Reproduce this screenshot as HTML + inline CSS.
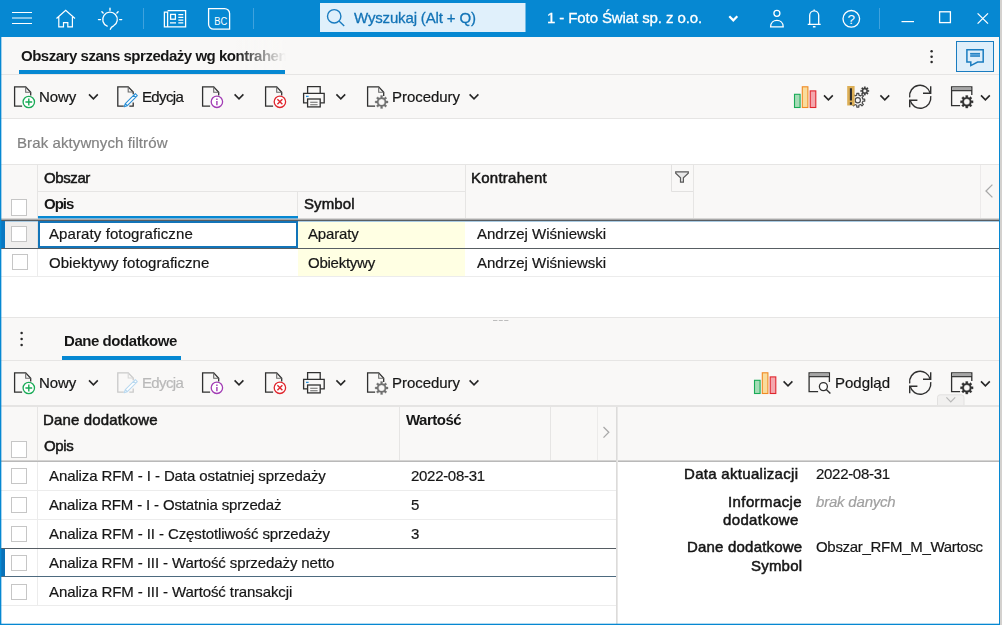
<!DOCTYPE html>
<html lang="pl">
<head>
<meta charset="utf-8">
<title>Obszary szans sprzedaży wg kontrahentów</title>
<style>
html,body{margin:0;padding:0;overflow:hidden;}
body{width:1002px;height:625px;overflow:hidden;background:#d4d1ce;position:relative;font-family:"Liberation Sans",sans-serif;font-size:15px;color:#161616;}
#win{position:absolute;left:0;top:0;width:1000px;height:625px;background:#fff;overflow:hidden;}
.abs{position:absolute;}
.t{position:absolute;white-space:nowrap;line-height:20px;height:20px;will-change:transform;-webkit-text-stroke:0.2px;}
.b{font-weight:bold;-webkit-text-stroke:0;}
.m{-webkit-text-stroke:0.5px;}
.hl{position:absolute;height:1px;background:#e6e5e4;}
.vl{position:absolute;width:1px;background:#e6e5e4;}
.bg{position:absolute;background:#f9f8f7;}
.cb{position:absolute;width:14px;height:14px;border:1px solid #c6c6c6;background:#fff;}
svg{position:absolute;overflow:visible;}
</style>
</head>
<body>
<div id="win">

<!-- ===== title bar ===== -->
<div class="abs" id="titlebar" style="left:0;top:0;width:1000px;height:37px;background:#0688d2;"></div>
<svg id="tb" width="1000" height="37" viewBox="0 0 1000 37" style="left:0;top:0;" fill="none" stroke="#fff" stroke-width="1.3">
<!-- hamburger -->
<path d="M12 12.500H32M12 18H32M12 23.500H32" stroke-width="1.150"/>
<!-- home -->
<path d="M56.5 18.5L65.7 10.3L75 18.5M58.8 17V26.8H63.5V22.6H67.8V26.8H72.4V17" stroke-width="1.200" stroke-linejoin="miter"/>
<!-- bulb -->
<path d="M107.2 26.2A7.3 7.3 0 1 1 113.6 25.8C111.8 26.6 110.8 27.6 110.3 29.3" stroke-width="1.300" stroke-linecap="round"/>
<path d="M110 8.300V10.300M101.900 11.700L103.100 12.900M118.100 11.700L116.900 12.900M98.500 19.600H100.500M119.700 19.600H121.700" stroke-width="1.400" stroke-linecap="round"/>
<!-- separators -->
<path d="M143.5 8V29M253.5 8V29M879.5 8V29" stroke="#3fa2dd" stroke-width="1"/>
<!-- news -->
<path d="M167.6 10.7H185.6V26.8H164.4V12.2H167.6V26.8" stroke-width="1.3"/>
<rect x="170.6" y="14.4" width="4.8" height="4.8" stroke-width="1.3"/>
<path d="M178.3 14.6H183.3M178.3 17.4H183.3M178.3 20.2H183.3M170 22.9H176M178.3 22.9H183.3" stroke-width="1.2"/>
<!-- BC -->
<path d="M208.6 8.6H224.6A5 5 0 0 1 229.6 13.6V29.2H213.6A5 5 0 0 1 208.6 24.2Z" stroke-width="1.3"/>
<!-- search box -->
<rect x="320" y="3" width="205.500" height="29" fill="#e0f0fb" stroke="none"/>
<circle cx="334.200" cy="16.300" r="6.700" stroke="#1a7cc0" stroke-width="1.4"/>
<path d="M339 21.100L344.200 26" stroke="#1a7cc0" stroke-width="1.4"/>
<!-- chevron -->
<path d="M729.300 16.200L733.300 20.300L737.300 16.200" stroke-width="2.200"/>
<!-- person -->
<circle cx="776.900" cy="13.300" r="3" stroke-width="1.300"/>
<path d="M770.600 26.800C770.600 18.200 783.200 18.200 783.200 26.800Z" stroke-width="1.300"/>
<!-- bell -->
<path d="M807.700 24.300H820.700M809.700 24.300V15.300A4.500 4.500 0 0 1 818.700 15.300V24.300" stroke-width="1.300"/>
<path d="M814.200 10.800V9.500M812.900 26.700H815.500" stroke-width="1.400"/>
<!-- help -->
<circle cx="851.300" cy="18.800" r="8.300" stroke-width="1.300"/>
<!-- min / max / close -->
<path d="M901.500 21.600H914" stroke-width="1.200"/>
<rect x="939.600" y="11.800" width="10.800" height="10.800" stroke-width="1.300"/>
<path d="M977.600 13.400L988 23.600M988 13.400L977.600 23.600" stroke-width="1.300"/>
<text x="214.300" y="25.400" font-family="Liberation Sans, sans-serif" font-size="10" fill="#fff" stroke="none" textLength="13" lengthAdjust="spacingAndGlyphs">BC</text>
<text x="851.200" y="23.900" font-family="Liberation Sans, sans-serif" font-size="13.500" fill="#fff" stroke="none" text-anchor="middle">?</text>
</svg>

<!-- ===== tab bar 1 ===== -->
<div class="bg" style="left:1px;top:37px;width:998px;height:37px;"></div>
<div class="hl" style="left:1px;top:74px;width:998px;"></div>
<div class="t b" style="left:21px;top:46px;width:265px;overflow:hidden;letter-spacing:-0.48px;">Obszary szans sprzedaży wg kontrahentów</div>
<div class="abs" style="left:236px;top:40px;width:52px;height:30px;background:linear-gradient(to right,rgba(249,248,247,0),rgba(249,248,247,1) 96%);"></div>
<div class="abs" style="left:19px;top:70px;width:266px;height:4px;background:#0688d2;"></div>

<svg width="80" height="37" viewBox="920 37 80 37" style="left:920px;top:37px;" fill="none">
<circle cx="931.6" cy="51.2" r="1.25" fill="#2a2a2a"/><circle cx="931.6" cy="56.700" r="1.25" fill="#2a2a2a"/><circle cx="931.6" cy="62.100" r="1.25" fill="#2a2a2a"/>
<rect x="956.5" y="41.5" width="37" height="30" fill="#deeefa" stroke="#1a7cc0" stroke-width="1"/>
<path d="M966.9 49.800H983.200V62H977.600L970.800 65.600V62H966.900Z" stroke="#1a7cc0" stroke-width="1.500" fill="none" stroke-linejoin="miter"/>
<rect x="970.200" y="53" width="9.800" height="3.600" fill="#5aa3d8"/>
<path d="M970.200 53.400H980M970.200 56.200H980" stroke="#1a7cc0" stroke-width="0.900"/>
</svg>
<!-- ===== toolbar 1 ===== -->
<div class="bg" style="left:1px;top:75px;width:998px;height:43px;"></div>
<div class="hl" style="left:1px;top:118px;width:998px;"></div>

<!--TB1--><svg width="1000" height="44" viewBox="0 75 1000 44" style="left:0;top:75px;" fill="none">
<path d="M22.1 106.1 H14.6 V86.8 H25.7 L30.7 92.2 V95.5" stroke="#303030" stroke-width="1.3" fill="none"/><path d="M25.7 86.8 V92.2 H30.7" stroke="#6a6a6a" stroke-width="1.1" fill="none"/>
<circle cx="28.8" cy="102" r="5.7" fill="#fff" stroke="#1aab57" stroke-width="1.3"/>
<path d="M25.4 102H32.2M28.8 98.6V105.4" stroke="#1aab57" stroke-width="1.4"/>
<path d="M89 94.4 L93.4 98.8 L97.8 94.4" stroke="#262626" stroke-width="1.6" fill="none"/>
<path d="M123.8 106.1 H117.8 V86.8 H128.2 L133.2 92 V94.3 M133.2 102.6 V106.1 H129.3" stroke="#303030" stroke-width="1.3" fill="none"/>
<path d="M128.2 86.8 V92 H133.2" stroke="#6a6a6a" stroke-width="1.1" fill="none"/>
<path d="M124.2 106.8 L125.3 103.7 L135.3 93.7 L137.3 95.7 L127.3 105.7 Z M125.3 103.7 L127.3 105.7 M133.7 95.3 L135.7 97.3" stroke="#2a8fd6" stroke-width="1.1" fill="#fff" stroke-linejoin="round"/>
<path d="M210.1 106.1 H202.6 V86.8 H213.7 L218.7 92.2 V95.5" stroke="#303030" stroke-width="1.3" fill="none"/><path d="M213.7 86.8 V92.2 H218.7" stroke="#6a6a6a" stroke-width="1.1" fill="none"/>
<circle cx="216.9" cy="101.8" r="5.7" fill="#fff" stroke="#a23cb4" stroke-width="1.3"/>
<path d="M216.9 98.4V99.9M216.9 101V105.2" stroke="#a23cb4" stroke-width="1.4"/>
<path d="M234.6 94.4 L239 98.8 L243.4 94.4" stroke="#262626" stroke-width="1.6" fill="none"/>
<path d="M273.1 106.1 H265.6 V86.8 H276.7 L281.7 92.2 V95.5" stroke="#303030" stroke-width="1.3" fill="none"/><path d="M276.7 86.8 V92.2 H281.7" stroke="#6a6a6a" stroke-width="1.1" fill="none"/>
<circle cx="279.9" cy="101.8" r="5.7" fill="#fff" stroke="#e0262d" stroke-width="1.3"/>
<path d="M277.4 99.3L282.4 104.3M282.4 99.3L277.4 104.3" stroke="#e0262d" stroke-width="1.4"/>
<path d="M307.6 93.4 V86.6 H320.2 V93.4" stroke="#303030" stroke-width="1.3" fill="none"/>
<path d="M307.6 102.8 H303.6 V93.4 H324.2 V102.8 H320.2" stroke="#303030" stroke-width="1.3" fill="none"/>
<rect x="307.6" y="99" width="12.6" height="7.9" stroke="#303030" stroke-width="1.3" fill="none"/>
<path d="M310.2 102.3H317.6M310.2 104.7H317.6" stroke="#6a6a6a" stroke-width="1.1"/>
<path d="M306 96.4H308.6" stroke="#2a8fd6" stroke-width="1.3"/>
<path d="M336.4 94.4 L340.8 98.8 L345.2 94.4" stroke="#262626" stroke-width="1.6" fill="none"/>
<path d="M375.1 106.1 H367.6 V86.8 H378.7 L383.7 92.2 V96" stroke="#303030" stroke-width="1.3" fill="none"/><path d="M378.7 86.8 V92.2 H383.7" stroke="#6a6a6a" stroke-width="1.1" fill="none"/>
<circle cx="381.6" cy="102" r="6" fill="#f9f8f7"/>
<path d="M380.68 97.39 L380.58 95.58 L382.62 95.58 L382.52 97.39 L384.21 98.09 L385.42 96.74 L386.86 98.18 L385.51 99.39 L386.21 101.08 L388.02 100.98 L388.02 103.02 L386.21 102.92 L385.51 104.61 L386.86 105.82 L385.42 107.26 L384.21 105.91 L382.52 106.61 L382.62 108.42 L380.58 108.42 L380.68 106.61 L378.99 105.91 L377.78 107.26 L376.34 105.82 L377.69 104.61 L376.99 102.92 L375.18 103.02 L375.18 100.98 L376.99 101.08 L377.69 99.39 L376.34 98.18 L377.78 96.74 L378.99 98.09Z M378.5 102 A3.1 3.1 0 1 0 384.7 102 A3.1 3.1 0 1 0 378.5 102Z" fill="#707070" fill-rule="evenodd" stroke="#707070" stroke-width="0.3" stroke-linejoin="round"/>
<path d="M469.6 94.4 L474 98.8 L478.4 94.4" stroke="#262626" stroke-width="1.6" fill="none"/>
<rect x="794.5" y="94.3" width="5.6" height="13.2" fill="#a5dcb6" stroke="#1aab57" stroke-width="1.1"/>
<rect x="802.3" y="86.8" width="5.6" height="20.7" fill="#f9dc9c" stroke="#f08a24" stroke-width="1.1"/>
<rect x="810.2" y="90.9" width="5.6" height="16.6" fill="#f4a7ad" stroke="#e0262d" stroke-width="1.1"/>
<path d="M824 95.4 L828.4 99.8 L832.8 95.4" stroke="#262626" stroke-width="1.6" fill="none"/>
<path d="M856.79 95.1 L856.77 93.28 L858.83 93.28 L858.81 95.1 L860.69 95.88 L861.97 94.58 L863.42 96.03 L862.12 97.31 L862.9 99.19 L864.72 99.17 L864.72 101.23 L862.9 101.21 L862.12 103.09 L863.42 104.37 L861.97 105.82 L860.69 104.52 L858.81 105.3 L858.83 107.12 L856.77 107.12 L856.79 105.3 L854.91 104.52 L853.63 105.82 L852.18 104.37 L853.48 103.09 L852.7 101.21 L850.88 101.23 L850.88 99.17 L852.7 99.19 L853.48 97.31 L852.18 96.03 L853.63 94.58 L854.91 95.88Z" stroke="#4a4a4a" stroke-width="1.2" fill="none" stroke-linejoin="round"/>
<circle cx="857.8" cy="100.2" r="2.6" stroke="#4a4a4a" stroke-width="1.2" fill="none"/>
<rect x="847.2" y="86" width="7.4" height="19.5" fill="#dcae55"/>
<path d="M864.15 87.97 L864.05 86.67 L865.55 86.67 L865.45 87.97 L866.41 88.37 L867.26 87.37 L868.33 88.44 L867.33 89.29 L867.73 90.25 L869.03 90.15 L869.03 91.65 L867.73 91.55 L867.33 92.51 L868.33 93.36 L867.26 94.43 L866.41 93.43 L865.45 93.83 L865.55 95.13 L864.05 95.13 L864.15 93.83 L863.19 93.43 L862.34 94.43 L861.27 93.36 L862.27 92.51 L861.87 91.55 L860.57 91.65 L860.57 90.15 L861.87 90.25 L862.27 89.29 L861.27 88.44 L862.34 87.37 L863.19 88.37Z M863.1 90.9 A1.7 1.7 0 1 0 866.5 90.9 A1.7 1.7 0 1 0 863.1 90.9Z" fill="#3a3a3a" fill-rule="evenodd" stroke="#3a3a3a" stroke-width="0.3" stroke-linejoin="round"/>
<path d="M850.9 88.3V100.4M850.9 102.3V104.7" stroke="#2b2b2b" stroke-width="2.1"/>
<path d="M880.4 95.4 L884.8 99.8 L889.2 95.4" stroke="#262626" stroke-width="1.6" fill="none"/>
<path d="M909.7 97.4 A10.5 10.5 0 0 1 930.3 93.4 M930.7 96.2 A10.5 10.5 0 0 1 910.1 100.2" stroke="#303030" stroke-width="1.4" fill="none"/>
<path d="M930.7 86.3 V93.2 H923 M909.7 107.3 V100.2 H917.4" stroke="#303030" stroke-width="1.4" fill="none"/>
<path d="M960.1 105.7 H951.6 V86.9 H971.8 V94.9 M951.6 90.7 H971.8" stroke="#303030" stroke-width="1.3" fill="none"/>
<rect x="952.2" y="87.5" width="19" height="2.6" fill="#a6a6a6"/>
<path d="M965.77 97.21 L965.68 95.5 L967.92 95.5 L967.83 97.21 L969.32 97.83 L970.46 96.55 L972.05 98.14 L970.77 99.28 L971.39 100.77 L973.1 100.68 L973.1 102.92 L971.39 102.83 L970.77 104.32 L972.05 105.46 L970.46 107.05 L969.32 105.77 L967.83 106.39 L967.92 108.1 L965.68 108.1 L965.77 106.39 L964.28 105.77 L963.14 107.05 L961.55 105.46 L962.83 104.32 L962.21 102.83 L960.5 102.92 L960.5 100.68 L962.21 100.77 L962.83 99.28 L961.55 98.14 L963.14 96.55 L964.28 97.83Z M963.8 101.8 A3 3 0 1 0 969.8 101.8 A3 3 0 1 0 963.8 101.8Z" fill="#2f2f2f" fill-rule="evenodd" stroke="#2f2f2f" stroke-width="0.3" stroke-linejoin="round"/>
<path d="M981 95.4 L985.4 99.8 L989.8 95.4" stroke="#262626" stroke-width="1.6" fill="none"/>
</svg>
<!--/TB1-->
<!-- ===== filter panel ===== -->

<!-- ===== grid 1 header ===== -->
<div class="hl" style="left:1px;top:164px;width:998px;"></div>
<div class="bg" style="left:1px;top:165px;width:998px;height:53px;"></div>
<div class="hl" style="left:38px;top:191px;width:428px;"></div>
<div class="vl" style="left:37px;top:165px;height:53px;"></div>
<div class="vl" style="left:297px;top:192px;height:26px;"></div>
<div class="vl" style="left:465px;top:165px;height:53px;"></div>
<div class="vl" style="left:693px;top:165px;height:53px;"></div>
<div class="vl" style="left:980px;top:165px;height:53px;background:#eceaea;"></div>
<div class="abs" style="left:38px;top:216px;width:260px;height:2px;background:#0688d2;"></div>
<div class="abs" style="left:1px;top:218px;width:998px;height:1px;background:#d7d6d5;"></div>
<div class="abs" style="left:38px;top:218px;width:260px;height:1px;background:#7eb4d8;"></div>
<div class="abs" style="left:1px;top:219px;width:998px;height:1px;background:#a9a9a9;"></div>
<div class="cb" style="left:11px;top:199px;height:15px;"></div>

<svg width="330" height="56" viewBox="670 164 330 56" style="left:670px;top:164px;" fill="none">
<path d="M671.500 165V191.500H693" stroke="#e2e1e0" stroke-width="1"/>
<path d="M675.700 171.800H688.300V173.300L683.400 177.800V182.200H680.500V177.800L675.700 173.300Z" stroke="#5a5a5a" stroke-width="1.200" fill="#e9e9e9" stroke-linejoin="miter"/>
<path d="M992.400 184.600L986 191L992.400 197.400" stroke="#a9a9a9" stroke-width="1.300"/>
</svg>
<!-- ===== grid 1 rows ===== -->
<div class="abs" style="left:298px;top:221px;width:167px;height:55px;background:#ffffe3;"></div>
<div class="abs" style="left:1px;top:220px;width:998px;height:1px;background:#585e63;"></div>
<div class="abs" style="left:1px;top:221px;width:998px;height:1px;background:#a9cbe3;"></div>
<div class="abs" style="left:1px;top:248px;width:998px;height:1px;background:#585e63;"></div>
<div class="abs" style="left:0;top:221px;width:5px;height:27px;background:#0a78c2;"></div>
<div class="abs" style="left:5px;top:222px;width:32px;height:26px;background:#efeeed;"></div>
<div class="vl" style="left:37px;top:222px;height:26px;background:#e2e1e0;"></div>
<div class="abs" style="left:38px;top:221px;width:256px;height:23px;border:2px solid #1274b8;background:#fff;"></div>
<div class="cb" style="left:11px;top:226px;"></div>
<div class="cb" style="left:12px;top:254px;"></div>
<div class="vl" style="left:37px;top:249px;height:27px;background:#ececec;"></div>
<div class="hl" style="left:1px;top:276px;width:998px;background:#ececec;"></div>

<!-- ===== splitter ===== -->
<div class="hl" style="left:1px;top:317px;width:998px;"></div>
<div class="bg" style="left:1px;top:318px;width:998px;height:43px;"></div>

<svg width="520" height="40" viewBox="0 318 520 40" style="left:0;top:318px;" fill="none">
<path d="M493 320.500H497.400M498.800 320.500H502.800M504.200 320.500H508.400" stroke="#bdbdbd" stroke-width="1"/>
<circle cx="21.600" cy="333" r="1.250" fill="#2a2a2a"/><circle cx="21.600" cy="339" r="1.250" fill="#2a2a2a"/><circle cx="21.600" cy="345" r="1.250" fill="#2a2a2a"/>
</svg>
<!-- ===== tab bar 2 ===== -->
<div class="abs" style="left:62px;top:356px;width:119px;height:4px;background:#0688d2;"></div>
<div class="hl" style="left:1px;top:360px;width:998px;"></div>

<!-- ===== toolbar 2 ===== -->
<div class="bg" style="left:1px;top:361px;width:998px;height:44px;"></div>
<div class="hl" style="left:1px;top:405px;width:998px;height:2px;background:#e5e4e3;"></div>

<!--TB2--><svg width="1000" height="45" viewBox="0 361 1000 45" style="left:0;top:361px;" fill="none">
<path d="M22.1 392.1 H14.6 V372.8 H25.7 L30.7 378.2 V381.5" stroke="#303030" stroke-width="1.3" fill="none"/><path d="M25.7 372.8 V378.2 H30.7" stroke="#6a6a6a" stroke-width="1.1" fill="none"/>
<circle cx="28.8" cy="388" r="5.7" fill="#fff" stroke="#1aab57" stroke-width="1.3"/>
<path d="M25.4 388H32.2M28.8 384.6V391.4" stroke="#1aab57" stroke-width="1.4"/>
<path d="M89 380.4 L93.4 384.8 L97.8 380.4" stroke="#262626" stroke-width="1.6" fill="none"/>
<path d="M123.8 392.1 H117.8 V372.8 H128.2 L133.2 378 V380.3 M133.2 388.6 V392.1 H129.3" stroke="#c9c9c9" stroke-width="1.3" fill="none"/>
<path d="M128.2 372.8 V378 H133.2" stroke="#d6d6d6" stroke-width="1.1" fill="none"/>
<path d="M124.2 392.8 L125.3 389.7 L135.3 379.7 L137.3 381.7 L127.3 391.7 Z M125.3 389.7 L127.3 391.7 M133.7 381.3 L135.7 383.3" stroke="#b9d9f0" stroke-width="1.1" fill="#fff" stroke-linejoin="round"/>
<path d="M210.1 392.1 H202.6 V372.8 H213.7 L218.7 378.2 V381.5" stroke="#303030" stroke-width="1.3" fill="none"/><path d="M213.7 372.8 V378.2 H218.7" stroke="#6a6a6a" stroke-width="1.1" fill="none"/>
<circle cx="216.9" cy="387.8" r="5.7" fill="#fff" stroke="#a23cb4" stroke-width="1.3"/>
<path d="M216.9 384.4V385.9M216.9 387V391.2" stroke="#a23cb4" stroke-width="1.4"/>
<path d="M234.6 380.4 L239 384.8 L243.4 380.4" stroke="#262626" stroke-width="1.6" fill="none"/>
<path d="M273.1 392.1 H265.6 V372.8 H276.7 L281.7 378.2 V381.5" stroke="#303030" stroke-width="1.3" fill="none"/><path d="M276.7 372.8 V378.2 H281.7" stroke="#6a6a6a" stroke-width="1.1" fill="none"/>
<circle cx="279.9" cy="387.8" r="5.7" fill="#fff" stroke="#e0262d" stroke-width="1.3"/>
<path d="M277.4 385.3L282.4 390.3M282.4 385.3L277.4 390.3" stroke="#e0262d" stroke-width="1.4"/>
<path d="M307.6 379.4 V372.6 H320.2 V379.4" stroke="#303030" stroke-width="1.3" fill="none"/>
<path d="M307.6 388.8 H303.6 V379.4 H324.2 V388.8 H320.2" stroke="#303030" stroke-width="1.3" fill="none"/>
<rect x="307.6" y="385" width="12.6" height="7.9" stroke="#303030" stroke-width="1.3" fill="none"/>
<path d="M310.2 388.3H317.6M310.2 390.7H317.6" stroke="#6a6a6a" stroke-width="1.1"/>
<path d="M306 382.4H308.6" stroke="#2a8fd6" stroke-width="1.3"/>
<path d="M336.4 380.4 L340.8 384.8 L345.2 380.4" stroke="#262626" stroke-width="1.6" fill="none"/>
<path d="M375.1 392.1 H367.6 V372.8 H378.7 L383.7 378.2 V382" stroke="#303030" stroke-width="1.3" fill="none"/><path d="M378.7 372.8 V378.2 H383.7" stroke="#6a6a6a" stroke-width="1.1" fill="none"/>
<circle cx="381.6" cy="388" r="6" fill="#f9f8f7"/>
<path d="M380.68 383.39 L380.58 381.58 L382.62 381.58 L382.52 383.39 L384.21 384.09 L385.42 382.74 L386.86 384.18 L385.51 385.39 L386.21 387.08 L388.02 386.98 L388.02 389.02 L386.21 388.92 L385.51 390.61 L386.86 391.82 L385.42 393.26 L384.21 391.91 L382.52 392.61 L382.62 394.42 L380.58 394.42 L380.68 392.61 L378.99 391.91 L377.78 393.26 L376.34 391.82 L377.69 390.61 L376.99 388.92 L375.18 389.02 L375.18 386.98 L376.99 387.08 L377.69 385.39 L376.34 384.18 L377.78 382.74 L378.99 384.09Z M378.5 388 A3.1 3.1 0 1 0 384.7 388 A3.1 3.1 0 1 0 378.5 388Z" fill="#707070" fill-rule="evenodd" stroke="#707070" stroke-width="0.3" stroke-linejoin="round"/>
<path d="M469.6 380.4 L474 384.8 L478.4 380.4" stroke="#262626" stroke-width="1.6" fill="none"/>
<rect x="754.5" y="380.3" width="5.6" height="13.2" fill="#a5dcb6" stroke="#1aab57" stroke-width="1.1"/>
<rect x="762.3" y="372.8" width="5.6" height="20.7" fill="#f9dc9c" stroke="#f08a24" stroke-width="1.1"/>
<rect x="770.2" y="376.9" width="5.6" height="16.6" fill="#f4a7ad" stroke="#e0262d" stroke-width="1.1"/>
<path d="M783.6 381.4 L788 385.8 L792.4 381.4" stroke="#262626" stroke-width="1.6" fill="none"/>
<path d="M818.1 391.7 H809.1 V372.9 H829.4 V381.9 M809.1 376.7 H829.4" stroke="#303030" stroke-width="1.3" fill="none"/>
<rect x="809.7" y="373.5" width="19.1" height="2.6" fill="#a6a6a6"/>
<circle cx="823.4" cy="386.6" r="4" stroke="#303030" stroke-width="1.3" fill="#fff"/>
<path d="M826.3 389.5L830.4 393.6" stroke="#303030" stroke-width="1.4"/>
<path d="M909.7 383.4 A10.5 10.5 0 0 1 930.3 379.4 M930.7 382.2 A10.5 10.5 0 0 1 910.1 386.2" stroke="#303030" stroke-width="1.4" fill="none"/>
<path d="M930.7 372.3 V379.2 H923 M909.7 393.3 V386.2 H917.4" stroke="#303030" stroke-width="1.4" fill="none"/>
<path d="M960.1 391.7 H951.6 V372.9 H971.8 V380.9 M951.6 376.7 H971.8" stroke="#303030" stroke-width="1.3" fill="none"/>
<rect x="952.2" y="373.5" width="19" height="2.6" fill="#a6a6a6"/>
<path d="M965.77 383.21 L965.68 381.5 L967.92 381.5 L967.83 383.21 L969.32 383.83 L970.46 382.55 L972.05 384.14 L970.77 385.28 L971.39 386.77 L973.1 386.68 L973.1 388.92 L971.39 388.83 L970.77 390.32 L972.05 391.46 L970.46 393.05 L969.32 391.77 L967.83 392.39 L967.92 394.1 L965.68 394.1 L965.77 392.39 L964.28 391.77 L963.14 393.05 L961.55 391.46 L962.83 390.32 L962.21 388.83 L960.5 388.92 L960.5 386.68 L962.21 386.77 L962.83 385.28 L961.55 384.14 L963.14 382.55 L964.28 383.83Z M963.8 387.8 A3 3 0 1 0 969.8 387.8 A3 3 0 1 0 963.8 387.8Z" fill="#2f2f2f" fill-rule="evenodd" stroke="#2f2f2f" stroke-width="0.3" stroke-linejoin="round"/>
<path d="M981 381.4 L985.4 385.8 L989.8 381.4" stroke="#262626" stroke-width="1.6" fill="none"/>
<path d="M937.5 405V397.5Q937.5 394.800 940 394.800H961.500Q964 394.800 964 397.500V405" fill="#f1f0ef" stroke="#e2e1e0" stroke-width="1"/>
<path d="M946.4 397.4 L950.8 401.8 L955.2 397.4" stroke="#b8b8b8" stroke-width="1.2" fill="none"/>
</svg>
<!--/TB2-->
<!-- ===== grid 2 header ===== -->
<div class="bg" style="left:1px;top:407px;width:998px;height:53px;"></div>
<div class="vl" style="left:37px;top:407px;height:53px;"></div>
<div class="vl" style="left:399px;top:407px;height:53px;"></div>
<div class="vl" style="left:550px;top:407px;height:53px;"></div>
<div class="vl" style="left:597px;top:407px;height:53px;background:#ecebea;"></div>
<div class="cb" style="left:11px;top:441px;height:15px;"></div>
<svg width="12" height="16" viewBox="600 425 12 16" style="left:600px;top:425px;" fill="none"><path d="M603.500 427L608.800 432.300L603.500 437.600" stroke="#a9a9a9" stroke-width="1.300"/></svg>
<div class="abs" style="left:1px;top:460px;width:998px;height:1px;background:#d4d3d2;"></div>
<div class="abs" style="left:1px;top:461px;width:998px;height:1px;background:#b9b9b9;"></div>

<!-- ===== grid 2 rows ===== -->
<div class="abs" style="left:1px;top:462px;width:998px;height:162px;background:#fff;"></div>
<div class="vl" style="left:37px;top:462px;height:144px;background:#ececec;"></div>
<div class="hl" style="left:1px;top:490px;width:615px;background:#ececec;"></div>
<div class="hl" style="left:1px;top:519px;width:615px;background:#ececec;"></div>
<div class="hl" style="left:1px;top:605px;width:615px;background:#ececec;"></div>
<div class="abs" style="left:1px;top:548px;width:615px;height:1px;background:#565d63;"></div>
<div class="abs" style="left:1px;top:576px;width:615px;height:1px;background:#4d6a7f;"></div>
<div class="abs" style="left:0;top:549px;width:5px;height:27px;background:#0a72b8;"></div>
<div class="cb" style="left:11px;top:468px;"></div>
<div class="cb" style="left:11px;top:497px;"></div>
<div class="cb" style="left:11px;top:526px;"></div>
<div class="cb" style="left:11px;top:555px;"></div>
<div class="cb" style="left:11px;top:584px;"></div>

<!-- ===== details panel ===== -->
<div class="abs" style="left:616px;top:407px;width:1px;height:217px;background:#dcdbda;"></div>
<div class="abs" style="left:617px;top:407px;width:1px;height:217px;background:#e8e7e6;"></div>
<!--TEXTS-->
<div class="t" style="left:353.5px;top:8px;letter-spacing:-0.15px;color:#1273b6;-webkit-text-stroke:0.3px;">Wyszukaj (Alt + Q)</div>
<div class="t" style="left:547px;top:8px;letter-spacing:-0.1px;color:#fff;-webkit-text-stroke:0.3px;">1 - Foto Świat sp. z o.o.</div>
<div class="t" style="left:39px;top:87px;letter-spacing:-0.05px;">Nowy</div>
<div class="t" style="left:142px;top:87px;letter-spacing:-0.65px;">Edycja</div>
<div class="t" style="left:392px;top:87px;letter-spacing:-0.05px;">Procedury</div>
<div class="t" style="left:16.5px;top:133px;letter-spacing:0.1px;color:#828282;">Brak aktywnych filtrów</div>
<div class="t m" style="left:44px;top:168px;letter-spacing:-0.4px;">Obszar</div>
<div class="t m" style="left:470.5px;top:168px;letter-spacing:0.25px;">Kontrahent</div>
<div class="t b" style="left:44px;top:194px;letter-spacing:-1px;">Opis</div>
<div class="t m" style="left:304px;top:194px;letter-spacing:0.1px;">Symbol</div>
<div class="t" style="left:48.5px;top:224px;letter-spacing:0.1px;">Aparaty fotograficzne</div>
<div class="t" style="left:308px;top:224px;letter-spacing:-0.15px;">Aparaty</div>
<div class="t" style="left:476.5px;top:224px;">Andrzej Wiśniewski</div>
<div class="t" style="left:48.5px;top:253px;letter-spacing:0.05px;">Obiektywy fotograficzne</div>
<div class="t" style="left:308px;top:253px;letter-spacing:-0.25px;">Obiektywy</div>
<div class="t" style="left:476.5px;top:253px;">Andrzej Wiśniewski</div>
<div class="t b" style="left:63.5px;top:331px;letter-spacing:-0.45px;">Dane dodatkowe</div>
<div class="t" style="left:39px;top:373px;letter-spacing:-0.05px;">Nowy</div>
<div class="t" style="left:142px;top:373px;letter-spacing:-0.65px;color:#b9b9b9;">Edycja</div>
<div class="t" style="left:392px;top:373px;letter-spacing:-0.05px;">Procedury</div>
<div class="t" style="left:835px;top:373px;">Podgląd</div>
<div class="t m" style="left:43px;top:410px;letter-spacing:0.15px;">Dane dodatkowe</div>
<div class="t b" style="left:406px;top:410px;letter-spacing:-0.5px;">Wartość</div>
<div class="t m" style="left:44px;top:436px;letter-spacing:-0.35px;">Opis</div>
<div class="t" style="left:48.5px;top:466px;letter-spacing:-0.1px;">Analiza RFM - I - Data ostatniej sprzedaży</div>
<div class="t" style="left:48.5px;top:495px;letter-spacing:-0.15px;">Analiza RFM - I - Ostatnia sprzedaż</div>
<div class="t" style="left:48.5px;top:524px;letter-spacing:-0.1px;">Analiza RFM - II - Częstotliwość sprzedaży</div>
<div class="t" style="left:48.5px;top:553px;letter-spacing:-0.1px;">Analiza RFM - III - Wartość sprzedaży netto</div>
<div class="t" style="left:48.5px;top:582px;letter-spacing:-0.1px;">Analiza RFM - III - Wartość transakcji</div>
<div class="t" style="left:410.5px;top:466px;letter-spacing:-0.3px;">2022-08-31</div>
<div class="t" style="left:410.5px;top:495px;">5</div>
<div class="t" style="left:410.5px;top:524px;">3</div>
<div class="t m" style="left:684px;top:464px;letter-spacing:0.3px;">Data aktualizacji</div>
<div class="t" style="left:816px;top:464px;letter-spacing:-0.3px;">2022-08-31</div>
<div class="t m" style="left:728px;top:492px;letter-spacing:0.4px;">Informacje</div>
<div class="t m" style="left:723px;top:510px;letter-spacing:0.35px;">dodatkowe</div>
<div class="t" style="left:816px;top:492px;letter-spacing:-0.2px;color:#a0a0a0;font-style:italic;">brak danych</div>
<div class="t m" style="left:687px;top:537px;letter-spacing:0.2px;">Dane dodatkowe</div>
<div class="t m" style="left:750.5px;top:556px;letter-spacing:0.2px;">Symbol</div>
<div class="t" style="left:816px;top:537px;letter-spacing:-0.3px;">Obszar_RFM_M_Wartosc</div>
<!--/TEXTS-->
<!-- window borders -->
<div class="abs" style="left:0;top:0;width:1px;height:625px;background:#0688d2;"></div>
<div class="abs" style="left:1px;top:37px;width:1px;height:588px;background:rgba(6,136,210,0.35);"></div>
<div class="abs" style="left:999px;top:0;width:1px;height:625px;background:#0688d2;"></div>
<div class="abs" style="left:0;top:623px;width:1000px;height:1px;background:rgba(6,136,210,0.3);"></div>
<div class="abs" style="left:0;top:624px;width:1000px;height:1px;background:#0688d2;"></div>
</div>
</body>
</html>
